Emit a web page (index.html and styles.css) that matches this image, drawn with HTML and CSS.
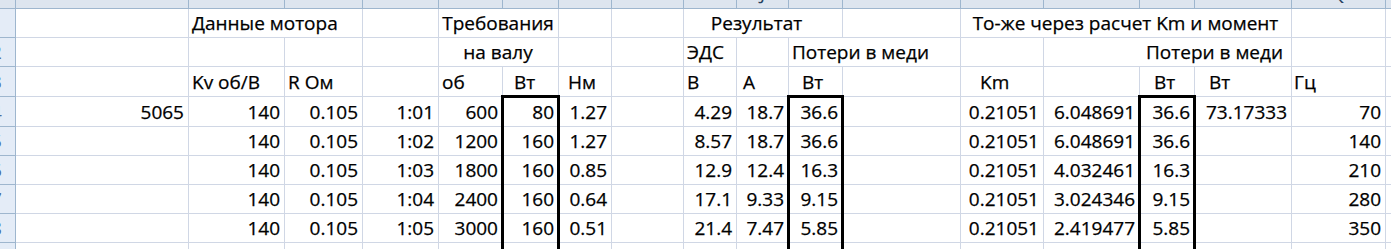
FILE: index.html
```html
<!DOCTYPE html>
<html lang="ru">
<head>
<meta charset="utf-8">
<title>Мотор</title>
<link rel="stylesheet" href="styles.css">
</head>
<body>
<div class="sheet">
  <div class="cn"></div>
  <div class="ch"><span>A</span></div><div class="ch"><span>B</span></div><div class="ch"><span>C</span></div><div class="ch"><span>D</span></div><div class="ch"><span>E</span></div><div class="ch"><span>F</span></div><div class="ch"><span>G</span></div><div class="ch"><span>H</span></div><div class="ch"><span>I</span></div><div class="ch"><span>J</span></div><div class="ch"><span>K</span></div><div class="ch"><span>L</span></div><div class="ch"><span>M</span></div><div class="ch"><span>N</span></div><div class="ch"><span>O</span></div><div class="ch"><span>P</span></div><div class="ch"><span>Q</span></div><div class="ch"><span>R</span></div>

  <div class="rh"><span>1</span></div>
  <div class="c"></div>
  <div class="c s2">Данные мотора</div>
  <div class="c"></div>
  <div class="c s2 ctr">Требования</div>
  <div class="c"></div>
  <div class="c"></div>
  <div class="c s3 ctr shift">Результат</div>
  <div class="c"></div>
  <div class="c s4 ctr">То-же через расчет Km и момент</div>
  <div class="c"></div>
  <div class="c"></div>

  <div class="rh"><span>2</span></div>
  <div class="c"></div>
  <div class="c"></div>
  <div class="c"></div>
  <div class="c"></div>
  <div class="c s2 ctr">на валу</div>
  <div class="c"></div>
  <div class="c"></div>
  <div class="c">ЭДС</div>
  <div class="c"></div>
  <div class="c s2">Потери в меди</div>
  <div class="c"></div>
  <div class="c s3 r pr8">Потери в меди</div>
  <div class="c"></div>
  <div class="c"></div>

  <div class="rh"><span>3</span></div>
  <div class="c"></div>
  <div class="c">Kv об/В</div>
  <div class="c">R Ом</div>
  <div class="c"></div>
  <div class="c">об</div>
  <div class="c pl11">Вт</div>
  <div class="c pl9">Нм</div>
  <div class="c"></div>
  <div class="c">В</div>
  <div class="c pl6">А</div>
  <div class="c pl13">Вт</div>
  <div class="c"></div>
  <div class="c pl19">Km</div>
  <div class="c"></div>
  <div class="c pl14">Вт</div>
  <div class="c pl14">Вт</div>
  <div class="c pl2">Гц</div>
  <div class="c"></div>

  <div class="rh"><span>4</span></div>
  <div class="c r">5065</div>
  <div class="c r">140</div>
  <div class="c r">0.105</div>
  <div class="c r">1:01</div>
  <div class="c r">600</div>
  <div class="c r bx top">80</div>
  <div class="c r">1.27</div>
  <div class="c"></div>
  <div class="c r">4.29</div>
  <div class="c r">18.7</div>
  <div class="c r bx top">36.6</div>
  <div class="c"></div>
  <div class="c r">0.21051</div>
  <div class="c r">6.048691</div>
  <div class="c r bx top">36.6</div>
  <div class="c r">73.17333</div>
  <div class="c r">70</div>
  <div class="c"></div>

  <div class="rh"><span>5</span></div>
  <div class="c"></div>
  <div class="c r">140</div>
  <div class="c r">0.105</div>
  <div class="c r">1:02</div>
  <div class="c r">1200</div>
  <div class="c r bx">160</div>
  <div class="c r">1.27</div>
  <div class="c"></div>
  <div class="c r">8.57</div>
  <div class="c r">18.7</div>
  <div class="c r bx">36.6</div>
  <div class="c"></div>
  <div class="c r">0.21051</div>
  <div class="c r">6.048691</div>
  <div class="c r bx">36.6</div>
  <div class="c"></div>
  <div class="c r">140</div>
  <div class="c"></div>

  <div class="rh"><span>6</span></div>
  <div class="c"></div>
  <div class="c r">140</div>
  <div class="c r">0.105</div>
  <div class="c r">1:03</div>
  <div class="c r">1800</div>
  <div class="c r bx">160</div>
  <div class="c r">0.85</div>
  <div class="c"></div>
  <div class="c r">12.9</div>
  <div class="c r">12.4</div>
  <div class="c r bx">16.3</div>
  <div class="c"></div>
  <div class="c r">0.21051</div>
  <div class="c r">4.032461</div>
  <div class="c r bx">16.3</div>
  <div class="c"></div>
  <div class="c r">210</div>
  <div class="c"></div>

  <div class="rh"><span>7</span></div>
  <div class="c"></div>
  <div class="c r">140</div>
  <div class="c r">0.105</div>
  <div class="c r">1:04</div>
  <div class="c r">2400</div>
  <div class="c r bx">160</div>
  <div class="c r">0.64</div>
  <div class="c"></div>
  <div class="c r">17.1</div>
  <div class="c r">9.33</div>
  <div class="c r bx">9.15</div>
  <div class="c"></div>
  <div class="c r">0.21051</div>
  <div class="c r">3.024346</div>
  <div class="c r bx">9.15</div>
  <div class="c"></div>
  <div class="c r">280</div>
  <div class="c"></div>

  <div class="rh"><span>8</span></div>
  <div class="c"></div>
  <div class="c r">140</div>
  <div class="c r">0.105</div>
  <div class="c r">1:05</div>
  <div class="c r">3000</div>
  <div class="c r bx">160</div>
  <div class="c r">0.51</div>
  <div class="c"></div>
  <div class="c r">21.4</div>
  <div class="c r">7.47</div>
  <div class="c r bx">5.85</div>
  <div class="c"></div>
  <div class="c r">0.21051</div>
  <div class="c r">2.419477</div>
  <div class="c r bx">5.85</div>
  <div class="c"></div>
  <div class="c r">350</div>
  <div class="c"></div>

  <div class="rh"><span>9</span></div>
  <div class="c"></div>
  <div class="c"></div>
  <div class="c"></div>
  <div class="c"></div>
  <div class="c"></div>
  <div class="c bx"></div>
  <div class="c"></div>
  <div class="c"></div>
  <div class="c"></div>
  <div class="c"></div>
  <div class="c bx"></div>
  <div class="c"></div>
  <div class="c"></div>
  <div class="c"></div>
  <div class="c bx"></div>
  <div class="c"></div>
  <div class="c"></div>
  <div class="c"></div>
</div>
</body>
</html>
```
FILE: styles.css
```css
html, body {
  margin: 0;
  padding: 0;
  background: #ffffff;
  overflow: hidden;
}

body {
  font-family: "Open Sans", "Liberation Sans", sans-serif;
  font-size: 19px;
  color: #000000;
}

.sheet {
  display: grid;
  grid-template-columns: 16px 173px 96px 78px 76px 64px 56px 53px 72px 53px 52px 54px 118px 83px 96px 55px 97px 94px 100px;
  grid-template-rows: 9px 29px 29px 30px 30px 29px 29px 29px 29px 29px;
  width: max-content;
}

.cn,
.ch {
  box-sizing: border-box;
  background: #dde5ef;
  border-right: 1px solid #9eb6ce;
  border-bottom: 1px solid #9eb6ce;
  overflow: hidden;
}

.ch {
  display: flex;
  justify-content: center;
  align-items: flex-start;
  color: #27415f;
  line-height: 19px;
}

.ch span {
  margin-top: -16px;
}

.rh {
  box-sizing: border-box;
  background: #e4ecf7;
  border-right: 1px solid #9eb6ce;
  border-bottom: 1px solid #9eb6ce;
  overflow: hidden;
  display: flex;
  justify-content: flex-start;
  align-items: flex-end;
  padding: 0 0 4px 0;
  color: #4d6d99;
  line-height: 20px;
}

.rh span {
  flex: none;
  margin-left: -9px;
}

.c {
  box-sizing: border-box;
  border-right: 1px solid #d0d7e5;
  border-bottom: 1px solid #d0d7e5;
  display: flex;
  align-items: flex-end;
  justify-content: flex-start;
  padding: 0 4px 4px 3px;
  line-height: 20px;
  white-space: nowrap;
  min-width: 0;
  -webkit-text-stroke: 0.25px #000000;
}

.r { justify-content: flex-end; }
.ctr { justify-content: center; }

.s2 { grid-column: span 2; }
.s3 { grid-column: span 3; }
.s4 { grid-column: span 4; }

.shift { padding-right: 16px; }
.pr8 { padding-right: 8px; }

.pl2 { padding-left: 2px; }
.pl6 { padding-left: 6px; }
.pl9 { padding-left: 9px; }
.pl11 { padding-left: 11px; }
.pl13 { padding-left: 13px; }
.pl14 { padding-left: 14px; }
.pl19 { padding-left: 19px; }

.bx {
  position: relative;
}

.bx::after {
  content: "";
  position: absolute;
  left: -2px;
  right: -2px;
  top: -1px;
  bottom: -1px;
  border-left: 3px solid #000000;
  border-right: 3px solid #000000;
}

.bx.top::after {
  top: -2px;
  border-top: 3px solid #000000;
}
```
